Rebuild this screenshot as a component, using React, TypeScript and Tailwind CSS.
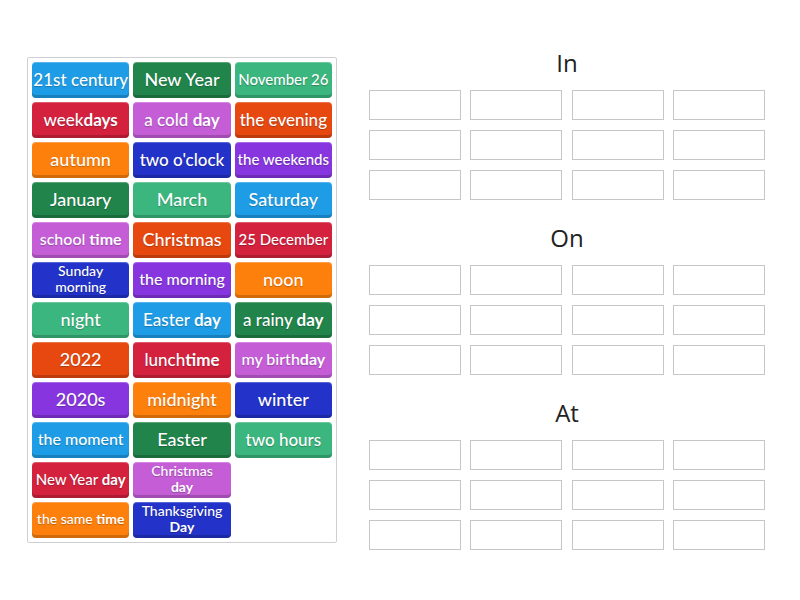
import React from 'react'

type Tile = { parts: [string, boolean][]; color: string; size: string; two?: boolean }

const C = {
  blue: 'bg-[#1e9de6]',
  dgreen: 'bg-[#20844b]',
  mint: 'bg-[#3ab67e]',
  red: 'bg-[#d3213e]',
  pink: 'bg-[#c55dd7]',
  orred: 'bg-[#e64810]',
  orange: 'bg-[#fd800c]',
  dblue: 'bg-[#2333c9]',
  purple: 'bg-[#8736df]',
}

const t = (text: string, color: string, size = 'text-[17px]'): Tile => ({ parts: [[text, false]], color, size })

const tiles: (Tile | null)[] = [
  t('21st century', C.blue),
  t('New Year', C.dgreen, 'text-[18px]'),
  t('November 26', C.mint, 'text-[15px]'),
  { parts: [['week', false], ['days', true]], color: C.red, size: 'text-[17px]' },
  { parts: [['a cold ', false], ['day', true]], color: C.pink, size: 'text-[17px]' },
  t('the evening', C.orred),
  t('autumn', C.orange, 'text-[18px]'),
  t("two o'clock", C.dblue),
  t('the weekends', C.purple, 'text-[15px]'),
  t('January', C.dgreen, 'text-[18px]'),
  t('March', C.mint, 'text-[18px]'),
  t('Saturday', C.blue, 'text-[18px]'),
  { parts: [['school ', false], ['time', true]], color: C.pink, size: 'text-[16px]' },
  t('Christmas', C.orred, 'text-[18px]'),
  t('25 December', C.red, 'text-[15px]'),
  { parts: [['Sunday', false], ['morning', false]], color: C.dblue, size: 'text-[14px]', two: true },
  t('the morning', C.purple, 'text-[16px]'),
  t('noon', C.orange, 'text-[18px]'),
  t('night', C.mint, 'text-[18px]'),
  { parts: [['Easter ', false], ['day', true]], color: C.blue, size: 'text-[17px]' },
  { parts: [['a rainy ', false], ['day', true]], color: C.dgreen, size: 'text-[17px]' },
  t('2022', C.orred, 'text-[18px]'),
  { parts: [['lunch', false], ['time', true]], color: C.red, size: 'text-[17px]' },
  { parts: [['my birth', false], ['day', true]], color: C.pink, size: 'text-[16px]' },
  t('2020s', C.purple, 'text-[18px]'),
  t('midnight', C.orange, 'text-[18px]'),
  t('winter', C.dblue, 'text-[18px]'),
  t('the moment', C.blue, 'text-[16px]'),
  t('Easter', C.dgreen, 'text-[18px]'),
  t('two hours', C.mint, 'text-[17px]'),
  { parts: [['New Year ', false], ['day', true]], color: C.red, size: 'text-[15px]' },
  { parts: [['Christmas', false], ['day', true]], color: C.pink, size: 'text-[14px]', two: true },
  null,
  { parts: [['the same ', false], ['time', true]], color: C.orange, size: 'text-[14px]' },
  { parts: [['Thanksgiving', false], ['Day', true]], color: C.dblue, size: 'text-[14px]', two: true },
]

function TileBox({ tile }: { tile: Tile }) {
  return (
    <div
      className={`${tile.color} ${tile.size} h-[36px] rounded-[4px] flex items-center justify-center text-center text-white font-medium overflow-hidden px-[1px] pb-[2px] whitespace-nowrap shadow-[inset_0_-3px_0_rgba(0,0,0,0.18),inset_0_1px_0_rgba(255,255,255,0.25)] [text-shadow:0_1px_1px_rgba(0,0,0,0.25)] ${tile.two ? 'leading-[16px]' : 'leading-none'}`}
    >
      <span className={tile.two ? 'flex flex-col items-center' : ''}>
        {tile.parts.map(([s, b], i) => (
          <span key={i} className={b ? 'font-bold' : ''}>
            {s}
          </span>
        ))}
      </span>
    </div>
  )
}

function Section({ title }: { title: string }) {
  return (
    <div className="flex flex-col items-center">
      <div className="h-[30px] leading-[30px] text-[24px] text-[#222] font-['Open_Sans',sans-serif]">{title}</div>
      <div className="mt-[12px] w-[396px] grid grid-cols-4 gap-x-[9.33px] gap-y-[10px]">
        {Array.from({ length: 12 }).map((_, i) => (
          <div key={i} className="h-[30px] bg-white border border-[#c6c6c6]" />
        ))}
      </div>
    </div>
  )
}

export default function App() {
  return (
    <div className="w-[800px] h-[600px] bg-white flex items-start pl-[27px] pt-[48px] font-['Lato','Noto_Sans',sans-serif]">
      <div className="mt-[9px] w-[310px] border border-[#cfcfcf] rounded-[2px] p-[4px]">
        <div className="grid grid-cols-3 gap-[4px]">
          {tiles.map((tile, i) => (tile ? <TileBox key={i} tile={tile} /> : <div key={i} />))}
        </div>
      </div>
      <div className="ml-[32px] flex flex-col gap-[23px]">
        <Section title="In" />
        <Section title="On" />
        <Section title="At" />
      </div>
    </div>
  )
}
